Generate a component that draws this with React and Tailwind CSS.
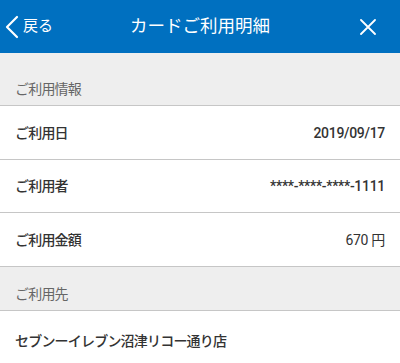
import React from 'react';

const FONT = { fontFamily: 'Roboto, "Noto Sans CJK JP", sans-serif' };

function SectionHeader({ label, first }) {
  return (
    <div className={`bg-[#eeeeee] border-b border-[#c6c6c6] px-[15px] flex items-end pb-[7px] ${first ? 'h-[53px]' : 'h-[44px]'}`}>
      <span className="text-[14px] leading-[17px] tracking-[-0.8px] text-[#666666]">{label}</span>
    </div>
  );
}

function Row({ label, children, h = 'h-[54px]' }) {
  return (
    <div className={`${h} flex items-center justify-between px-[15px] pt-[1px] border-b border-[#c6c6c6] bg-white`}>
      <span className="text-[14px] tracking-[-0.8px] font-medium text-[#333333]">{label}</span>
      <span className="text-[14px] tracking-[-0.3px] text-[#333333]">{children}</span>
    </div>
  );
}

export default function App() {
  return (
    <div className="w-[400px] h-[363px] overflow-hidden bg-white" style={FONT}>
      {/* Header */}
      <div className="h-[53px] bg-[#0070c0] flex items-center px-[5px] text-white">
        <div className="flex items-center w-[80px]">
          <svg width="14" height="24" viewBox="0 0 14 24" fill="none" stroke="white" strokeWidth="2.2" strokeLinecap="round" strokeLinejoin="round">
            <path d="M12 2 L2 12 L12 22" />
          </svg>
          <span className="ml-[4px] text-[15px]">戻る</span>
        </div>
        <div className="flex-1 text-center text-[17.5px]">カードご利用明細</div>
        <div className="w-[80px] flex justify-end pr-[19px]">
          <svg width="16" height="16" viewBox="0 0 16 16" stroke="white" strokeWidth="1.8" strokeLinecap="round">
            <path d="M1 1 L15 15 M15 1 L1 15" />
          </svg>
        </div>
      </div>

      <SectionHeader label="ご利用情報" first />
      <Row label="ご利用日">
        <span className="font-medium">2019/09/17</span>
      </Row>
      <Row label="ご利用者" h="h-[53px]">
        <span className="font-medium">****-****-****-1111</span>
      </Row>
      <Row label="ご利用金額">670 円</Row>
      <SectionHeader label="ご利用先" />
      <div className="h-[58px] flex items-center px-[15px] pt-[2px] bg-white">
        <span className="text-[14px] tracking-[-0.8px] font-medium text-[#333333]">セブンーイレブン沼津リコー通り店</span>
      </div>
    </div>
  );
}
